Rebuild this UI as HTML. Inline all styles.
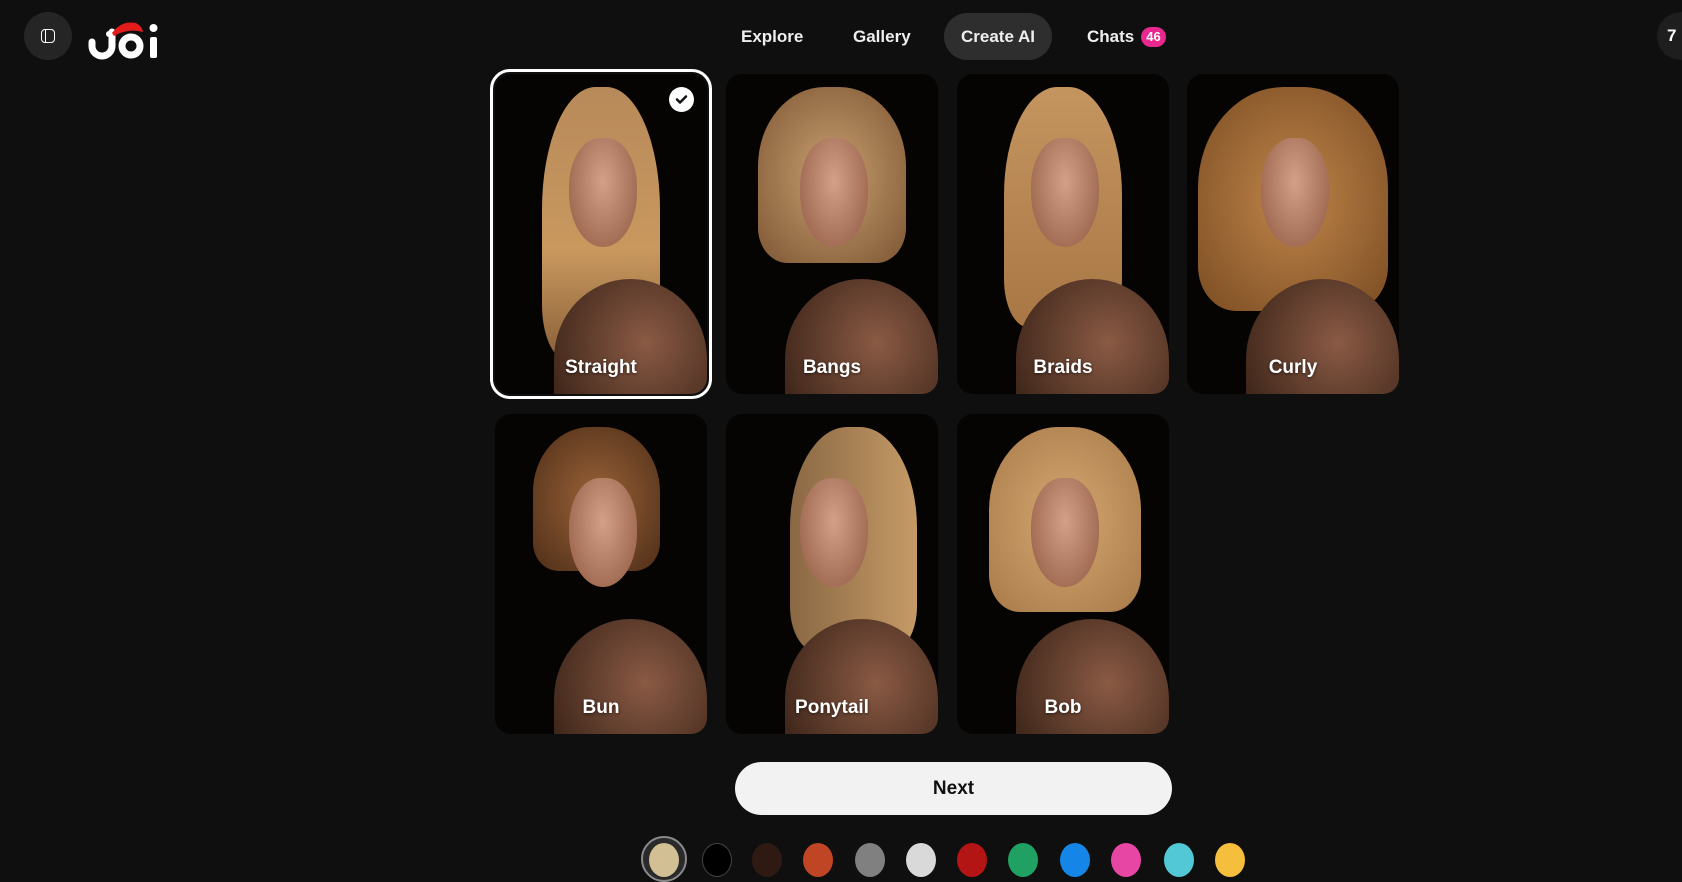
<!DOCTYPE html>
<html><head><meta charset="utf-8"><style>
*{box-sizing:border-box;margin:0;padding:0}
body{width:1682px;height:862px;background:#0f0f0f;overflow:hidden;position:relative;font-family:"Liberation Sans",sans-serif;color:#fff}
.menu{position:absolute;left:24px;top:12px;width:48px;height:48px;border-radius:50%;background:#252525}
.menu i{position:absolute;left:17px;top:17px;width:14px;height:14px;border:1.6px solid #fff;border-radius:4px}
.menu i:after{content:"";position:absolute;left:3px;top:0;bottom:0;border-left:1.6px solid #fff}
.nav{position:absolute;top:13px;height:47px;line-height:47px;font-size:17px;font-weight:bold;color:#eee}
.pill{background:#2e2e2e;border-radius:24px;padding:0 17px}
.badge{position:absolute;left:1141px;top:27px;width:25px;height:20px;border-radius:10px;background:#e8288f;font-size:13px;font-weight:bold;text-align:center;line-height:20px}
.right{position:absolute;left:1657px;top:12px;width:50px;height:48px;border-radius:24px;background:#1e1e1e;font-weight:bold;font-size:17px;line-height:48px;padding-left:10px}
.card{position:absolute;width:212px;height:320px;border-radius:16px;overflow:hidden;background:#050403}
.card .hair{position:absolute;left:22%;top:4%;width:56%;height:85%;border-radius:45% 45% 20% 20%}
.card .face{position:absolute;left:35%;top:20%;width:32%;height:34%;border-radius:45% 45% 50% 50%;background:radial-gradient(ellipse at 50% 40%,#d4a088,#9a644c 85%)}
.card .sh{position:absolute;left:28%;top:64%;width:72%;height:50%;border-radius:50% 50% 0 0;background:radial-gradient(ellipse at 60% 40%,#8a5a44,#3e261a 80%)}
.card .lbl{position:absolute;left:0;right:0;bottom:15px;text-align:center;font-weight:bold;font-size:19px;text-shadow:0 1px 3px rgba(0,0,0,.6)}
.sel{position:absolute;left:490px;top:69px;width:222px;height:330px;border:3px solid #fff;border-radius:20px}
.chk{position:absolute;left:669px;top:87px;width:25px;height:25px;border-radius:50%;background:#fff}
.next{position:absolute;left:735px;top:762px;width:437px;height:53px;border-radius:27px;background:#f2f2f2;color:#111;font-size:19px;font-weight:bold;text-align:center;line-height:53px}
.sw{position:absolute;top:843px;width:30px;height:34px;border-radius:50%}
</style></head><body>
<div class="menu"><i></i></div>
<svg style="position:absolute;left:88px;top:16px" width="72" height="44" viewBox="0 0 72 44">
<path d="M4 26 v4 a10 10 0 0 0 20 0 V16" stroke="#fff" stroke-width="7" fill="none" stroke-linecap="round"/>
<circle cx="43" cy="30" r="9" stroke="#fff" stroke-width="7" fill="none"/>
<path d="M24 17 Q34 4 48 7 Q54 10 55 16 Q40 12 26 20Z" fill="#e31b1b"/>
<circle cx="21" cy="18" r="3" fill="#fff"/>
<rect x="62" y="21" width="7" height="21" rx="2" fill="#fff"/>
<circle cx="65.5" cy="12" r="4" fill="#fff"/>
</svg>
<div class="nav" style="left:741px">Explore</div>
<div class="nav" style="left:853px">Gallery</div>
<div class="nav pill" style="left:944px">Create AI</div>
<div class="nav" style="left:1087px">Chats</div>
<div class="badge">46</div>
<div class="right">7</div>

<div class="card" style="left:495px;top:74px"><div class="hair" style="background:linear-gradient(#b88a5a,#c8985e 60%,#8a6038)"></div><div class="sh"></div><div class="face"></div><div class="lbl">Straight</div></div>
<div class="card" style="left:726px;top:74px"><div class="hair" style="height:55%;left:15%;width:70%;background:radial-gradient(ellipse,#c9a070,#7d5634)"></div><div class="sh"></div><div class="face"></div><div class="lbl">Bangs</div></div>
<div class="card" style="left:957px;top:74px"><div class="hair" style="height:75%;background:linear-gradient(#c59560,#a87744)"></div><div class="sh"></div><div class="face"></div><div class="lbl">Braids</div></div>
<div class="card" style="left:1187px;top:74px"><div class="hair" style="left:5%;width:90%;height:70%;background:radial-gradient(ellipse,#c0854a,#7a4c22)"></div><div class="sh"></div><div class="face"></div><div class="lbl">Curly</div></div>
<div class="card" style="left:495px;top:414px"><div class="hair" style="height:45%;left:18%;width:60%;background:radial-gradient(ellipse,#9a6238,#4e2e18)"></div><div class="sh"></div><div class="face"></div><div class="lbl">Bun</div></div>
<div class="card" style="left:726px;top:414px"><div class="hair" style="left:30%;width:60%;height:70%;background:linear-gradient(90deg,#8a6844,#c59a66)"></div><div class="sh"></div><div class="face"></div><div class="lbl">Ponytail</div></div>
<div class="card" style="left:957px;top:414px"><div class="hair" style="left:15%;width:72%;height:58%;background:radial-gradient(ellipse,#d5a772,#a87a48)"></div><div class="sh"></div><div class="face"></div><div class="lbl">Bob</div></div>
<div class="sel"></div>
<div class="chk"><svg width="25" height="25" viewBox="0 0 25 25"><path d="M8 12.5l3 3 6-6" stroke="#111" stroke-width="2.5" fill="none" stroke-linecap="round" stroke-linejoin="round"/></svg></div>

<div class="next">Next</div>
<div style="position:absolute;left:641px;top:836px;width:46px;height:46px;border-radius:50%;border:2px solid #888;background:#2a2a2a"></div>
<div class="sw" style="left:649px;background:#d2c094"></div>
<div class="sw" style="left:702px;background:#000;border:1px solid #444"></div>
<div class="sw" style="left:752px;background:#2e1a12"></div>
<div class="sw" style="left:803px;background:#bf4524"></div>
<div class="sw" style="left:855px;background:#808080"></div>
<div class="sw" style="left:906px;background:#d9d9d9"></div>
<div class="sw" style="left:957px;background:#b31414"></div>
<div class="sw" style="left:1008px;background:#21a063"></div>
<div class="sw" style="left:1060px;background:#1585e8"></div>
<div class="sw" style="left:1111px;background:#e846a4"></div>
<div class="sw" style="left:1164px;background:#52c8d6"></div>
<div class="sw" style="left:1215px;background:#f5be3d"></div>
</body></html>
